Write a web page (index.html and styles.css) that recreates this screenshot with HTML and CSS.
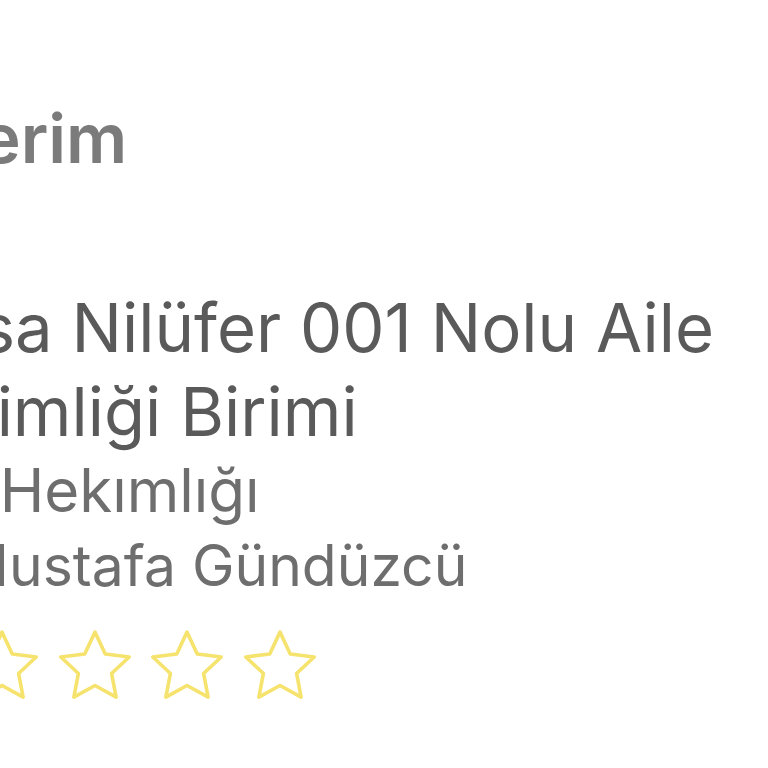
FILE: index.html
```html
<!DOCTYPE html>
<html lang="tr">
<head>
<meta charset="utf-8">
<title>Hekimlerim</title>
<link rel="stylesheet" href="styles.css">
</head>
<body>
<div class="screen">
  <h1 class="nav-title">Hekimlerim</h1>
  <section class="card">
    <h2 class="unit">Bursa Nilüfer 001 Nolu Aile<br>Hekimliği Birimi</h2>
    <p class="type">Aile Hekımlığı</p>
    <p class="doctor">Dr. Mustafa Gündüzcü</p>
    <div class="stars">
      <svg class="star" viewBox="0 0 70 70"><path d="M35 2L44.7 22.65L67.34 25.49L50.69 41.1L54.98 63.51L35 52.5L15.02 63.51L19.31 41.1L2.66 25.49L25.3 22.65Z"/></svg>
      <svg class="star" viewBox="0 0 70 70"><path d="M35 2L44.7 22.65L67.34 25.49L50.69 41.1L54.98 63.51L35 52.5L15.02 63.51L19.31 41.1L2.66 25.49L25.3 22.65Z"/></svg>
      <svg class="star" viewBox="0 0 70 70"><path d="M35 2L44.7 22.65L67.34 25.49L50.69 41.1L54.98 63.51L35 52.5L15.02 63.51L19.31 41.1L2.66 25.49L25.3 22.65Z"/></svg>
      <svg class="star" viewBox="0 0 70 70"><path d="M35 2L44.7 22.65L67.34 25.49L50.69 41.1L54.98 63.51L35 52.5L15.02 63.51L19.31 41.1L2.66 25.49L25.3 22.65Z"/></svg>
      <svg class="star" viewBox="0 0 70 70"><path d="M35 2L44.7 22.65L67.34 25.49L50.69 41.1L54.98 63.51L35 52.5L15.02 63.51L19.31 41.1L2.66 25.49L25.3 22.65Z"/></svg>
    </div>
  </section>
</div>
</body>
</html>
```

FILE: styles.css
```css
html, body {
  margin: 0;
  padding: 0;
  background: #ffffff;
}

.screen {
  width: 768px;
  height: 768px;
  overflow: hidden;
  font-family: Inter, "Noto Sans", sans-serif;
}

.nav-title {
  margin: 98px 0 0 -246px;
  font-size: 68px;
  font-weight: 600;
  color: #7b7b7b;
  line-height: 80px;
  white-space: nowrap;
}

.card {
  margin: 108px 0 0 -129px;
}

.unit {
  margin: 0;
  font-size: 67px;
  font-weight: 400;
  line-height: 84px;
  color: #5a5a5a;
  white-space: nowrap;
}

.type,
.doctor {
  margin: 0;
  line-height: 76px;
  color: #6e6e6e;
  white-space: nowrap;
}

.type {
  margin-top: -2px;
  margin-left: 6px;
  font-size: 60px;
}

.doctor {
  margin-left: -5px;
  font-size: 57px;
}

.stars {
  display: flex;
  gap: 18.5px;
  margin-top: 26px;
  margin-left: 1.5px;
}

.star {
  flex: none;
  width: 74px;
  height: 74px;
  fill: none;
  stroke: #f6e36e;
  stroke-width: 3.4;
  stroke-linejoin: round;
}
```
